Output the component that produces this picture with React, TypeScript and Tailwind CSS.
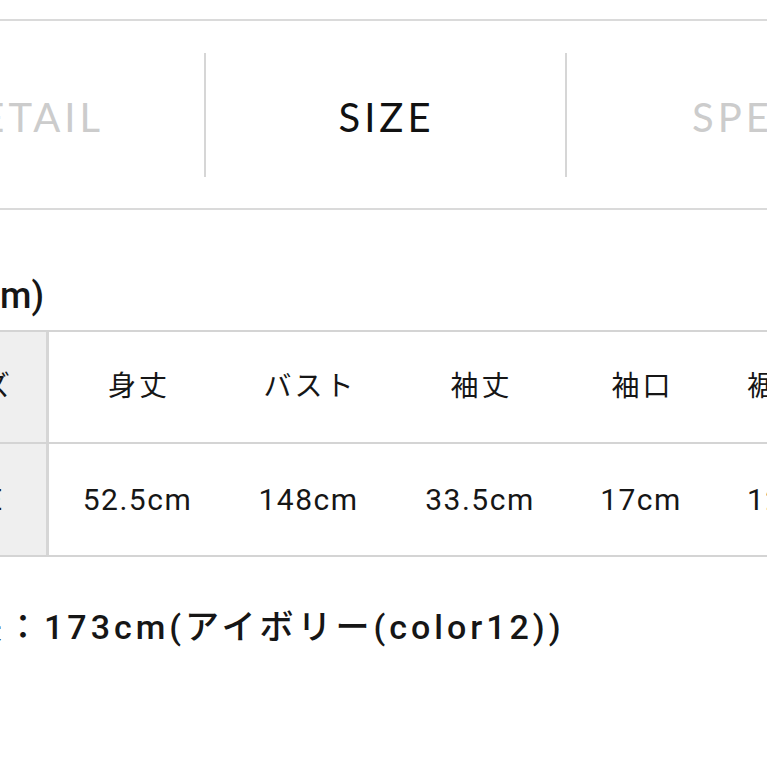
import React from "react";

const tabs = [
  { label: "DETAIL", active: false },
  { label: "SIZE", active: true },
  { label: "SPEC", active: false },
];

const columns = [
  { head: "身丈", value: "52.5cm", width: "w-[177px]" },
  { head: "バスト", value: "148cm", width: "w-[165px]" },
  { head: "袖丈", value: "33.5cm", width: "w-[178px]" },
  { head: "袖口", value: "17cm", width: "w-[144px]" },
];

const bodyFont = {
  fontFamily: '"Roboto", "Noto Sans CJK JP", sans-serif',
};

export default function App() {
  return (
    <div
      className="w-[767px] h-[767px] overflow-hidden bg-white text-[#161616]"
      style={bodyFont}
    >
      {/* tab bar */}
      <div className="mt-[19px] border-y-2 border-[#dadada] h-[191px] flex items-center -ml-[155px] w-[1100px]">
        {tabs.map((tab, i) => (
          <React.Fragment key={tab.label}>
            {i > 0 && <div className="w-[2px] h-[124px] bg-[#d6d6d6] shrink-0" />}
            <div
              className={
                "w-[359px] shrink-0 flex justify-center text-[40px] leading-none tracking-[4px] pt-[4px] pl-[2px] " +
                (tab.active ? "text-[#111111]" : "text-[#cccccc]")
              }
              style={{ fontFamily: '"Lato", "Open Sans", sans-serif' }}
            >
              {tab.label}
            </div>
          </React.Fragment>
        ))}
      </div>

      {/* title */}
      <div className="mt-[66px] mb-[14px] h-[40px] w-[44px] flex justify-end whitespace-nowrap text-[36px] leading-[40px] font-medium">
        サイズ(cm)
      </div>

      {/* size table */}
      <div className="border-y-2 border-[#d4d4d4] w-[900px]">
        <div className="flex h-[112px] border-b-2 border-[#d4d4d4]">
          <div className="w-[49px] shrink-0 bg-[#efefef] border-r-[3px] border-[#d6d6d6] flex items-center justify-end pr-[34px] whitespace-nowrap text-[28px] tracking-[2px]">
            サイズ
          </div>
          {columns.map((c) => (
            <div
              key={c.head}
              className={c.width + " shrink-0 flex items-center justify-center text-[28px] tracking-[3px] pl-[3px]"}
            >
              {c.head}
            </div>
          ))}
          <div className="flex items-center pl-[34px] text-[28px] tracking-[3px] whitespace-nowrap">
            裾幅
          </div>
        </div>
        <div className="flex h-[111px]">
          <div className="w-[49px] shrink-0 bg-[#efefef] border-r-[3px] border-[#d6d6d6] flex items-center justify-end pr-[43px] whitespace-nowrap text-[30px] tracking-[1px]">
            FREE
          </div>
          {columns.map((c) => (
            <div
              key={c.head}
              className={c.width + " shrink-0 flex items-center justify-center text-[30px] tracking-[1.5px]"}
            >
              {c.value}
            </div>
          ))}
          <div className="flex items-center pl-[34px] text-[30px] tracking-[1.5px] whitespace-nowrap">
            125cm
          </div>
        </div>
      </div>

      {/* model note */}
      <div className="mt-[50px] h-[40px] flex whitespace-nowrap text-[34px] leading-[40px] font-medium tracking-[4px]">
        <div className="w-[6px] shrink-0 flex justify-end">モデル身長</div>
        <div>：173cm(アイボリー(color12))</div>
      </div>
    </div>
  );
}
